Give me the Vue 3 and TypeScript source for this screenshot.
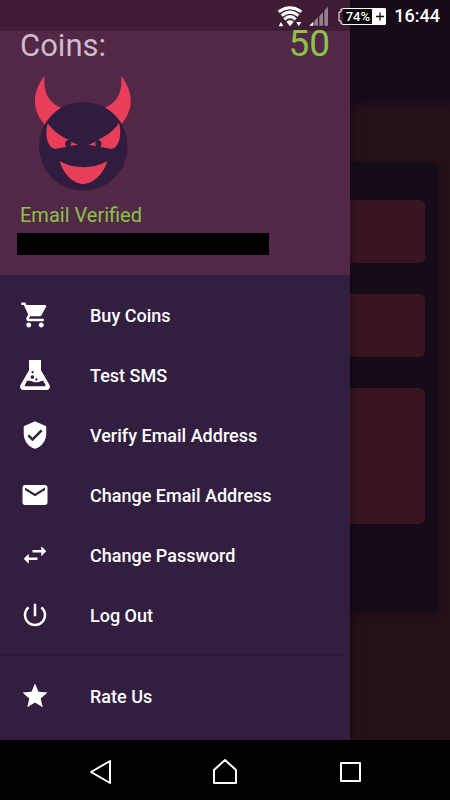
<script setup lang="ts">
import { ref } from 'vue'

interface MenuItem {
  label: string
  path: string
}

const coins = ref<number>(50)
const battery = ref<number>(74)

const accountItems: MenuItem[] = [
  {
    label: 'Buy Coins',
    path: 'M7 18c-1.1 0-1.99.9-1.99 2S5.9 22 7 22s2-.9 2-2-.9-2-2-2zM1 2v2h2l3.6 7.59-1.35 2.45c-.16.28-.25.61-.25.96 0 1.1.9 2 2 2h12v-2H7.42c-.14 0-.25-.11-.25-.25l.03-.12.9-1.63h7.45c.75 0 1.41-.41 1.75-1.03l3.58-6.49A1 1 0 0 0 20 4H5.21l-.94-2H1zm16 16c-1.1 0-1.99.9-1.99 2s.89 2 1.99 2 2-.9 2-2-.9-2-2-2z',
  },
  {
    label: 'Test SMS',
    path: 'M7.2 0H16.8V8.2L23.500 19.800C24.600 22 23.500 24 21.200 24H2.800C.5 24-.6 22 .5 19.800L7.200 8.200zM5.600 16.600Q8.500 16.400 10.500 17.300T15.500 17.300Q17.500 16.400 18.700 16.700L20.500 20.100Q20.600 20.900 19.900 20.900H4.300Q3.600 20.900 3.800 20.100zM10.100 8.800a.9.9 0 1 0 .01 0zM9.900 12.200a1.400 1.400 0 1 0 .01 0zM13.100 14.600a.9.9 0 1 0 .01 0z',
  },
  {
    label: 'Verify Email Address',
    path: 'M12 1 3 5v6c0 5.550 3.840 10.740 9 12 5.160-1.260 9-6.450 9-12V5l-9-4zm-2 16-4-4 1.410-1.410L10 14.170l6.590-6.590L18 9l-8 8z',
  },
  {
    label: 'Change Email Address',
    path: 'M20 4H4c-1.100 0-1.990.9-1.990 2L2 18c0 1.100.9 2 2 2h16c1.100 0 2-.9 2-2V6c0-1.100-.9-2-2-2zm0 4-8 5-8-5V6l8 5 8-5v2z',
  },
  {
    label: 'Change Password',
    path: 'M6.990 11 3 15l3.990 4v-3H14v-2H6.990v-3zM21 9l-3.990-4v3H10v2h7.010v3L21 9z',
  },
  {
    label: 'Log Out',
    path: 'M13 3h-2v10h2V3zm4.830 2.170-1.420 1.420A6.920 6.920 0 0 1 19 12c0 3.870-3.130 7-7 7s-7-3.130-7-7c0-2.190 1.010-4.140 2.580-5.420L6.170 5.170A8.930 8.930 0 0 0 3 12a9 9 0 0 0 18 0c0-2.740-1.230-5.180-3.170-6.830z',
  },
]

const otherItems: MenuItem[] = [
  {
    label: 'Rate Us',
    path: 'M12 17.270 18.180 21l-1.640-7.030L22 9.240l-7.190-.61L12 2 9.190 8.630 2 9.240l5.460 4.730L5.820 21z',
  },
]
</script>

<template>
  <div class="device">
    <div class="stage">
      <main class="page" inert>
        <div class="app-bar"></div>
        <form class="card">
          <input class="field" type="text" aria-label="Sender" />
          <input class="field" type="text" aria-label="Recipient" />
          <textarea class="field message" aria-label="Message"></textarea>
        </form>
      </main>

      <aside class="drawer">
        <header class="profile">
          <div class="balance">
            <span class="balance-label">Coins:</span>
            <span class="balance-value">{{ coins }}</span>
          </div>
          <svg class="avatar" viewBox="42 12 291 354" aria-hidden="true">
            <g fill="#e83e5a">
              <path d="M74 17C35 66 35 120 74 164L124 113C91 102 68 72 74 17z" />
              <path d="M303 17C342 66 342 120 303 164L253 113C286 102 309 72 303 17z" />
            </g>
            <circle cx="190" cy="229" r="133" fill="#301c3e" />
            <g fill="#e83e5a">
              <path d="M83 160C101 184 124 201 146 209C134 211 132 225 140 231C120 233 116 237 103 236C84 232 73 198 83 160z" />
              <path d="M153 215L174 224L151 228Q156 221 153 215z" />
              <path d="M297 160C279 184 256 201 234 209C246 211 248 225 240 231C260 233 264 237 277 236C296 232 307 198 297 160z" />
              <path d="M227 215L206 224L229 228Q224 221 227 215z" />
              <path d="M119 273C160 298 220 298 262 273C250 315 216 342 190 342C164 342 130 315 119 273z" />
            </g>
          </svg>
          <p class="verified">Email Verified</p>
          <div class="email"></div>
        </header>

        <nav class="menu">
          <ul class="group">
            <li v-for="item in accountItems" :key="item.label">
              <button type="button" class="item">
                <svg class="item-icon" viewBox="0 0 24 24" aria-hidden="true">
                  <path :d="item.path" fill-rule="evenodd" />
                </svg>
                <span>{{ item.label }}</span>
              </button>
            </li>
          </ul>
          <ul class="group">
            <li v-for="item in otherItems" :key="item.label">
              <button type="button" class="item">
                <svg class="item-icon" viewBox="0 0 24 24" aria-hidden="true">
                  <path :d="item.path" />
                </svg>
                <span>{{ item.label }}</span>
              </button>
            </li>
          </ul>
        </nav>
      </aside>

      <div class="status">
        <svg class="wifi" viewBox="21 15 78 66" aria-hidden="true">
          <g fill="none" stroke="#fff" stroke-width="9">
            <path d="M26 35Q60 11 94 35" />
            <path d="M35 47Q60 26 85 47" />
            <path d="M43 58Q60 42 77 58" />
          </g>
          <path d="M49 65Q60 57 71 65L60 79zM26 79L33 66L40 79zM79 66H94L86 79z" fill="#fff" />
        </svg>
        <svg class="signal" viewBox="117 18 60 60" aria-hidden="true">
          <path d="M118 77L130 65V77z" fill="#fff" />
          <path d="M133 63L144 52V77H133zM148 48L159 36V77H148zM163 32L174 20V77H163z" fill="#94808f" />
        </svg>
        <div class="battery">
          <svg class="battery-tip" viewBox="0 0 5 17" aria-hidden="true">
            <path d="M5 1H3V4H1V13H3V16H5" fill="none" stroke="#fff" />
          </svg>
          <span class="battery-level">{{ battery }}%</span>
          <svg class="battery-plus" viewBox="0 0 13 17" aria-hidden="true">
            <path d="M0 0H12L13 1V16L12 17H0z" fill="#fff" />
            <path d="M3 8.500H11M7 4.500V12.500" stroke="#111" stroke-width="1.300" />
          </svg>
        </div>
        <time class="clock">16:44</time>
      </div>
    </div>

    <footer class="system-nav">
      <button type="button" aria-label="Back">
        <svg viewBox="0 0 30 30"><path d="M6 15L25 4V26z" /></svg>
      </button>
      <button type="button" aria-label="Home">
        <svg viewBox="0 0 30 30"><path d="M4 13L15 3L26 13V26H4z" /></svg>
      </button>
      <button type="button" aria-label="Recent apps">
        <svg viewBox="0 0 30 30"><path d="M6 6H25V24H6z" /></svg>
      </button>
    </footer>
  </div>
</template>

<style>
body {
  margin: 0;
  background: #000;
}
</style>

<style scoped>
.device {
  box-sizing: border-box;
  display: flex;
  flex-direction: column;
  min-height: 100vh;
  font-family: Roboto, "Liberation Sans", sans-serif;
  color: #fff;
  background: #000;
}

button {
  margin: 0;
  padding: 0;
  border: 0;
  background: none;
  color: inherit;
  font: inherit;
  cursor: pointer;
}

.stage {
  position: relative;
  flex: 1;
  display: grid;
}

.page,
.drawer {
  grid-area: 1 / 1;
}

.page {
  background: #231019;
}

.app-bar {
  height: 102px;
  background: #150c18;
  box-shadow: 0 1px 4px #150c18;
}

.card {
  display: flex;
  flex-direction: column;
  gap: 31px;
  box-sizing: border-box;
  height: 450px;
  margin: 60px 12px 0;
  padding: 38px 13px;
  border-radius: 6px;
  background: #150c18;
  box-shadow: 0 2px 4px #180c16;
}

.field {
  box-sizing: border-box;
  display: block;
  width: 100%;
  height: 63px;
  margin: 0;
  padding: 0 16px;
  border: 0;
  border-radius: 6px;
  background: #391520;
  color: #fff;
  font: inherit;
  resize: none;
}

.message {
  height: 136px;
}

.drawer {
  position: relative;
  display: flex;
  flex-direction: column;
  width: calc(100% - 100px);
  background: #321e3f;
  box-shadow: 0 0 8px rgba(0, 0, 0, 0.5);
}

.profile {
  box-sizing: border-box;
  padding: 24px 20px 20px;
  background: linear-gradient(rgba(0, 0, 0, 0.25) 31px, transparent 31px), #532746;
}

.balance {
  display: flex;
  align-items: baseline;
  justify-content: space-between;
  height: 50px;
  line-height: 40px;
}

.balance-label {
  font-size: 31px;
  color: #cfbccb;
}

.balance-value {
  font-size: 37px;
  color: #8bc34a;
}

.avatar {
  display: block;
  width: 97px;
  height: 118px;
  margin-left: 14px;
}

.verified {
  margin: 11px 0 6px;
  font-size: 20px;
  line-height: 24px;
  color: #8bc34a;
}

.email {
  width: 252px;
  height: 22px;
  margin-left: -3px;
  background: #000;
}

.group {
  margin: 0;
  padding: 10px 0;
  list-style: none;
}

.group + .group {
  border-top: 1px solid #2b1937;
}

.item {
  display: flex;
  align-items: center;
  gap: 40px;
  width: 100%;
  height: 60px;
  padding: 0 20px;
  font-size: 18px;
  font-weight: 500;
  text-align: left;
}

.item-icon {
  width: 30px;
  height: 30px;
  fill: #fff;
}

.status {
  position: absolute;
  inset: 0 0 auto;
  display: flex;
  align-items: center;
  justify-content: flex-end;
  height: 32px;
  padding-right: 10px;
}

.wifi {
  width: 26px;
  height: 22px;
  margin-right: 6px;
}

.signal {
  width: 20px;
  height: 20px;
  margin-right: 9px;
}

.battery {
  display: flex;
  align-items: center;
  height: 17px;
  margin-right: 8px;
}

.battery-tip {
  width: 5px;
  height: 17px;
}

.battery-level {
  box-sizing: border-box;
  width: 30px;
  height: 17px;
  border: 1px solid #fff;
  border-left: 0;
  background: #0c080c;
  font-size: 13px;
  font-weight: 500;
  line-height: 15px;
  text-align: center;
}

.battery-plus {
  width: 13px;
  height: 17px;
}

.clock {
  font-size: 18px;
  font-weight: 500;
  line-height: 32px;
}

.system-nav {
  box-sizing: border-box;
  display: grid;
  grid-template-columns: repeat(3, 1fr);
  align-items: center;
  height: 60px;
  padding: 4px 37px 0;
}

.system-nav button {
  display: flex;
  justify-content: center;
}

.system-nav svg {
  width: 30px;
  height: 30px;
  fill: none;
  stroke: #fff;
  stroke-width: 2;
  stroke-linejoin: round;
}
</style>
